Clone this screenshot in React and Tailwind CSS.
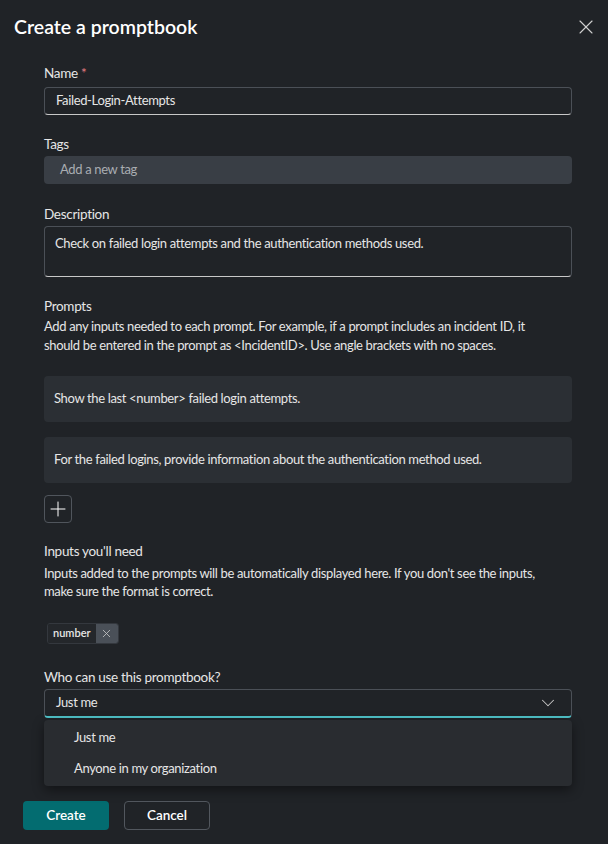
import { X, Plus, ChevronDown } from 'lucide-react';

const font = { fontFamily: 'Lato, "Noto Sans", sans-serif' };

function Label({ children, required }) {
  return (
    <div className="text-[13.5px] leading-[20px] tracking-[-0.3px] text-[#e6e6e6]">
      {children}
      {required && <span className="text-[#e37d80]"> *</span>}
    </div>
  );
}

export default function App() {
  const prompts = [
    'Show the last <number> failed login attempts.',
    'For the failed logins, provide information about the authentication method used.',
  ];

  return (
    <div className="w-[608px] h-[844px] bg-[#202327] text-[#e6e6e6] overflow-hidden" style={font}>
      <div className="flex items-center justify-between pl-[14px] pr-[10px] pt-[12px]">
        <h1 className="text-[19.5px] leading-[30px] font-semibold text-white">Create a promptbook</h1>
        <X size={24} strokeWidth={1.1} className="text-[#d0d0d0]" />
      </div>

      <div className="pl-[44px] pr-[36px] pt-[21px] flex flex-col text-[13px] tracking-[-0.35px]">
        <Label required>Name</Label>
        <div className="mt-[4px] h-[28px] flex items-center px-[11px] rounded-[4px] border border-[#4b5057] border-b-[#c8c8c8]">
          Failed-Login-Attempts
        </div>

        <div className="mt-[19px]">
          <Label>Tags</Label>
        </div>
        <div className="mt-[2px] h-[28px] flex items-center px-[16px] rounded-[4px] bg-[#393e45] text-[#a9adb2]">
          Add a new tag
        </div>

        <div className="mt-[20px]">
          <Label>Description</Label>
        </div>
        <div className="mt-[2px] h-[51px] px-[10px] pt-[6px] leading-[20px] rounded-[4px] border border-[#4b5057] border-b-[#c8c8c8]">
          Check on failed login attempts and the authentication methods used.
        </div>

        <div className="mt-[19px]">
          <Label>Prompts</Label>
        </div>
        <p className="mt-[1px] leading-[19px]">
          Add any inputs needed to each prompt. For example, if a prompt includes an incident ID, it
          <br />
          should be entered in the prompt as &lt;IncidentID&gt;. Use angle brackets with no spaces.
        </p>

        <div className="mt-[21px] flex flex-col gap-[15px]">
          {prompts.map((p) => (
            <div key={p} className="h-[46px] flex items-center px-[10px] rounded-[4px] bg-[#2b2f34]">
              {p}
            </div>
          ))}
        </div>

        <button className="mt-[12px] w-[28px] h-[28px] flex items-center justify-center rounded-[4px] border border-[#50555c] text-white">
          <Plus size={24} strokeWidth={1} />
        </button>

        <div className="mt-[18px]">
          <Label>Inputs you'll need</Label>
        </div>
        <p className="mt-[3px] leading-[18px]">
          Inputs added to the prompts will be automatically displayed here. If you don't see the inputs,
          <br />
          make sure the format is correct.
        </p>

        <div className="mt-[23px] ml-[3px] flex">
          <div className="flex h-[21px] rounded-[3px] overflow-hidden border border-[#34383e]">
            <span className="px-[5px] flex items-center text-[11px] tracking-normal font-semibold bg-[#24272b] text-[#e6e6e6]">number</span>
            <span className="w-[22px] flex items-center justify-center bg-[#4a5058] text-[#c8c8c8]">
              <X size={13} strokeWidth={1.5} />
            </span>
          </div>
        </div>

        <div className="mt-[23px]">
          <Label>Who can use this promptbook?</Label>
        </div>
        <div className="relative mt-[2px]">
          <div className="h-[29px] flex items-center justify-between pl-[11px] pr-[12px] rounded-[4px] border border-[#4b5057] border-b-2 border-b-[#4fc2c8]">
            <span>Just me</span>
            <ChevronDown size={22} strokeWidth={1.1} className="text-[#c8c8c8]" />
          </div>
          <div className="absolute left-0 right-0 top-[31px] h-[66px] rounded-[4px] bg-[#292c30] shadow-[0_4px_12px_rgba(0,0,0,0.45)] flex flex-col justify-center gap-[12px] pl-[30px] z-10">
            <div>Just me</div>
            <div>Anyone in my organization</div>
          </div>
        </div>
      </div>

      <div className="mt-[83px] pl-[23px] flex gap-[15px]">
        <button className="w-[86px] h-[29px] rounded-[4px] bg-[#036c70] text-white text-[13.5px] font-semibold">Create</button>
        <button className="w-[86px] h-[29px] rounded-[4px] border border-[#52575e] text-white text-[13.5px] font-semibold">Cancel</button>
      </div>
    </div>
  );
}
